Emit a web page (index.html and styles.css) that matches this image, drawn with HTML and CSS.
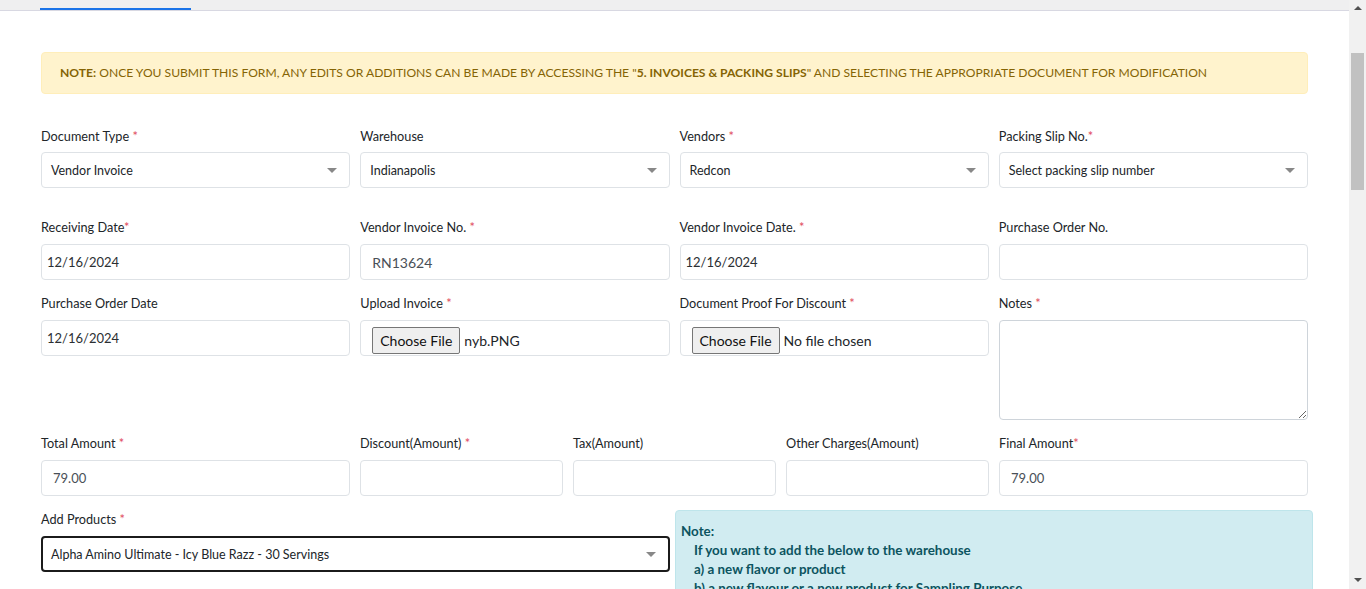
FILE: index.html
```html
<!DOCTYPE html>
<html lang="en">
<head>
<meta charset="utf-8">
<title>Add Invoice</title>
<link rel="stylesheet" href="styles.css">
</head>
<body>
<div class="page">
  <div class="main">
    <div class="tabbar"><div class="tab-active"></div></div>
    <div class="content">
      <div class="alert-warn"><b>NOTE:</b> ONCE YOU SUBMIT THIS FORM, ANY EDITS OR ADDITIONS CAN BE MADE BY ACCESSING THE "<b>5. INVOICES &amp; PACKING SLIPS</b>" AND SELECTING THE APPROPRIATE DOCUMENT FOR MODIFICATION</div>

      <div class="row4 first">
        <div class="field">
          <label>Document Type <span class="req">*</span></label>
          <div class="control select"><span>Vendor Invoice</span><i class="caret"></i></div>
        </div>
        <div class="field">
          <label>Warehouse</label>
          <div class="control select"><span>Indianapolis</span><i class="caret"></i></div>
        </div>
        <div class="field">
          <label>Vendors <span class="req">*</span></label>
          <div class="control select"><span>Redcon</span><i class="caret"></i></div>
        </div>
        <div class="field">
          <label>Packing Slip No.<span class="req">*</span></label>
          <div class="control select"><span>Select packing slip number</span><i class="caret"></i></div>
        </div>
      </div>

      <div class="row4">
        <div class="field">
          <label>Receiving Date<span class="req">*</span></label>
          <div class="control date"><span>12/16/2024</span></div>
        </div>
        <div class="field">
          <label>Vendor Invoice No. <span class="req">*</span></label>
          <div class="control text"><span>RN13624</span></div>
        </div>
        <div class="field">
          <label>Vendor Invoice Date. <span class="req">*</span></label>
          <div class="control date"><span>12/16/2024</span></div>
        </div>
        <div class="field">
          <label>Purchase Order No.</label>
          <div class="control text"></div>
        </div>
      </div>

      <div class="row4">
        <div class="field">
          <label>Purchase Order Date</label>
          <div class="control date"><span>12/16/2024</span></div>
        </div>
        <div class="field">
          <label>Upload Invoice <span class="req">*</span></label>
          <div class="control file"><span class="file-btn">Choose File</span><span class="file-name">nyb.PNG</span></div>
        </div>
        <div class="field">
          <label>Document Proof For Discount <span class="req">*</span></label>
          <div class="control file"><span class="file-btn">Choose File</span><span class="file-name">No file chosen</span></div>
        </div>
        <div class="field">
          <label>Notes <span class="req">*</span></label>
          <textarea class="notes"></textarea>
        </div>
      </div>

      <div class="row5">
        <div class="field">
          <label>Total Amount <span class="req">*</span></label>
          <div class="control text amt"><span>79.00</span></div>
        </div>
        <div class="field">
          <label>Discount(Amount) <span class="req">*</span></label>
          <div class="control text"></div>
        </div>
        <div class="field">
          <label>Tax(Amount)</label>
          <div class="control text"></div>
        </div>
        <div class="field">
          <label>Other Charges(Amount)</label>
          <div class="control text"></div>
        </div>
        <div class="field">
          <label>Final Amount<span class="req">*</span></label>
          <div class="control text amt"><span>79.00</span></div>
        </div>
      </div>

      <div class="row-products">
        <div class="field products">
          <label>Add Products <span class="req">*</span></label>
          <div class="control select focused"><span>Alpha Amino Ultimate - Icy Blue Razz - 30 Servings</span><i class="caret"></i></div>
        </div>
        <div class="alert-info">
          <div class="info-title">Note:</div>
          <div class="info-line">If you want to add the below to the warehouse</div>
          <div class="info-line">a) a new flavor or product</div>
          <div class="info-line">b) a new flavour or a new product for Sampling Purpose</div>
        </div>
      </div>
    </div>
  </div>
  <div class="scrollbar">
    <div class="sb-up"></div>
    <div class="sb-thumb"></div>
    <div class="sb-track"></div>
    <div class="sb-down"></div>
  </div>
</div>
</body>
</html>
```

FILE: styles.css
```css
* { box-sizing: border-box; }
html, body { margin: 0; padding: 0; height: 100%; overflow: hidden; background: #fff; }
body { font-family: "Lato", "Open Sans", sans-serif; font-size: 12.7px; color: #212529; }

.page { display: flex; height: 589px; }
.main { flex: 1; min-width: 0; overflow: hidden; }

.tabbar { height: 11px; background: #efeff0; border-bottom: 1px solid #d8d8e2; padding-left: 40px; }
.tab-active { width: 151px; height: 10px; border-bottom: 2px solid #1a73e8; }

.content { padding: 41px 41px 0 41px; }

.alert-warn {
  background: #fff3cd; border: 1px solid #ffeeba; border-radius: 4px;
  color: #856404; padding: 12px 18px; font-size: 12.1px; line-height: 16px;
  text-transform: uppercase; white-space: nowrap; margin-bottom: 34px;
}
.alert-warn b { font-weight: 700; }

.row4 { display: grid; grid-template-columns: repeat(4, 1fr); column-gap: 10px; margin-bottom: 15px; }
.row4.first { margin-bottom: 31px; }
.row5 { display: grid; grid-template-columns: 309fr 203fr 203fr 203fr 309fr; column-gap: 10px; margin-bottom: 14px; }

.field { display: flex; flex-direction: column; }
.field label { display: block; line-height: 16px; margin-bottom: 9px; color: #212529; white-space: nowrap; }
.row4.first .field label { margin-bottom: 8px; }
.req { color: #e0475a; }

.control {
  height: 36px; border: 1px solid #dee2e6; border-radius: 4px; background: #fff;
  display: flex; align-items: center; color: #495057; font-size: 13px;
}
.control.select { padding: 0 12px 0 9px; justify-content: space-between; color: #212529; font-size: 12.5px; }
.control.date { padding-left: 5px; font-size: 13px; color: #2b2f33; }
.control.text { padding-left: 11px; font-size: 14px; }
.control.amt { font-size: 13px; }
.control.file { padding-left: 11px; font-size: 14px; color: #212529; }
.file-btn {
  display: inline-flex; align-items: center; height: 27px; padding: 0 7px;
  background: #efefef; border: 1px solid #767676; border-radius: 2px; color: #111;
  margin-right: 4px; margin-top: 4px;
}
.file-name { margin-top: 4px; }
.caret { width: 0; height: 0; border-left: 5px solid transparent; border-right: 5px solid transparent; border-top: 5px solid #888; }

.notes {
  height: 100px; border: 1px solid #ced4da; border-radius: 4px; resize: vertical;
  font: inherit; padding: 6px 10px; display: block; width: 100%;
}

.row-products { display: flex; align-items: flex-start; gap: 5px; margin-right: -5px; }
.products { width: 629px; flex: none; padding-top: 1px; }
.control.focused { border: 2px solid #1b1b1b; border-radius: 4px; padding-left: 8px; font-size: 12.5px; }

.alert-info {
  flex: 1; background: #d1ecf1; border: 1px solid #bee5eb; border-radius: 4px;
  color: #0c5460; font-weight: 700; font-size: 13.4px; line-height: 19px;
  padding: 11px 6px 20px 5px;
}
.info-line { padding-left: 13px; }

.scrollbar { width: 17px; flex: none; background: #f1f1f1; display: flex; flex-direction: column; align-items: center; }
.sb-up { margin-top: 6px; width: 0; height: 0; border-left: 4px solid transparent; border-right: 4px solid transparent; border-bottom: 4px solid #505050; }
.sb-thumb { margin-top: 43px; width: 13px; height: 137px; background: #c1c1c1; }
.sb-track { flex: 1; }
.sb-down { margin-bottom: 7px; width: 0; height: 0; border-left: 4px solid transparent; border-right: 4px solid transparent; border-top: 4px solid #505050; }
```
